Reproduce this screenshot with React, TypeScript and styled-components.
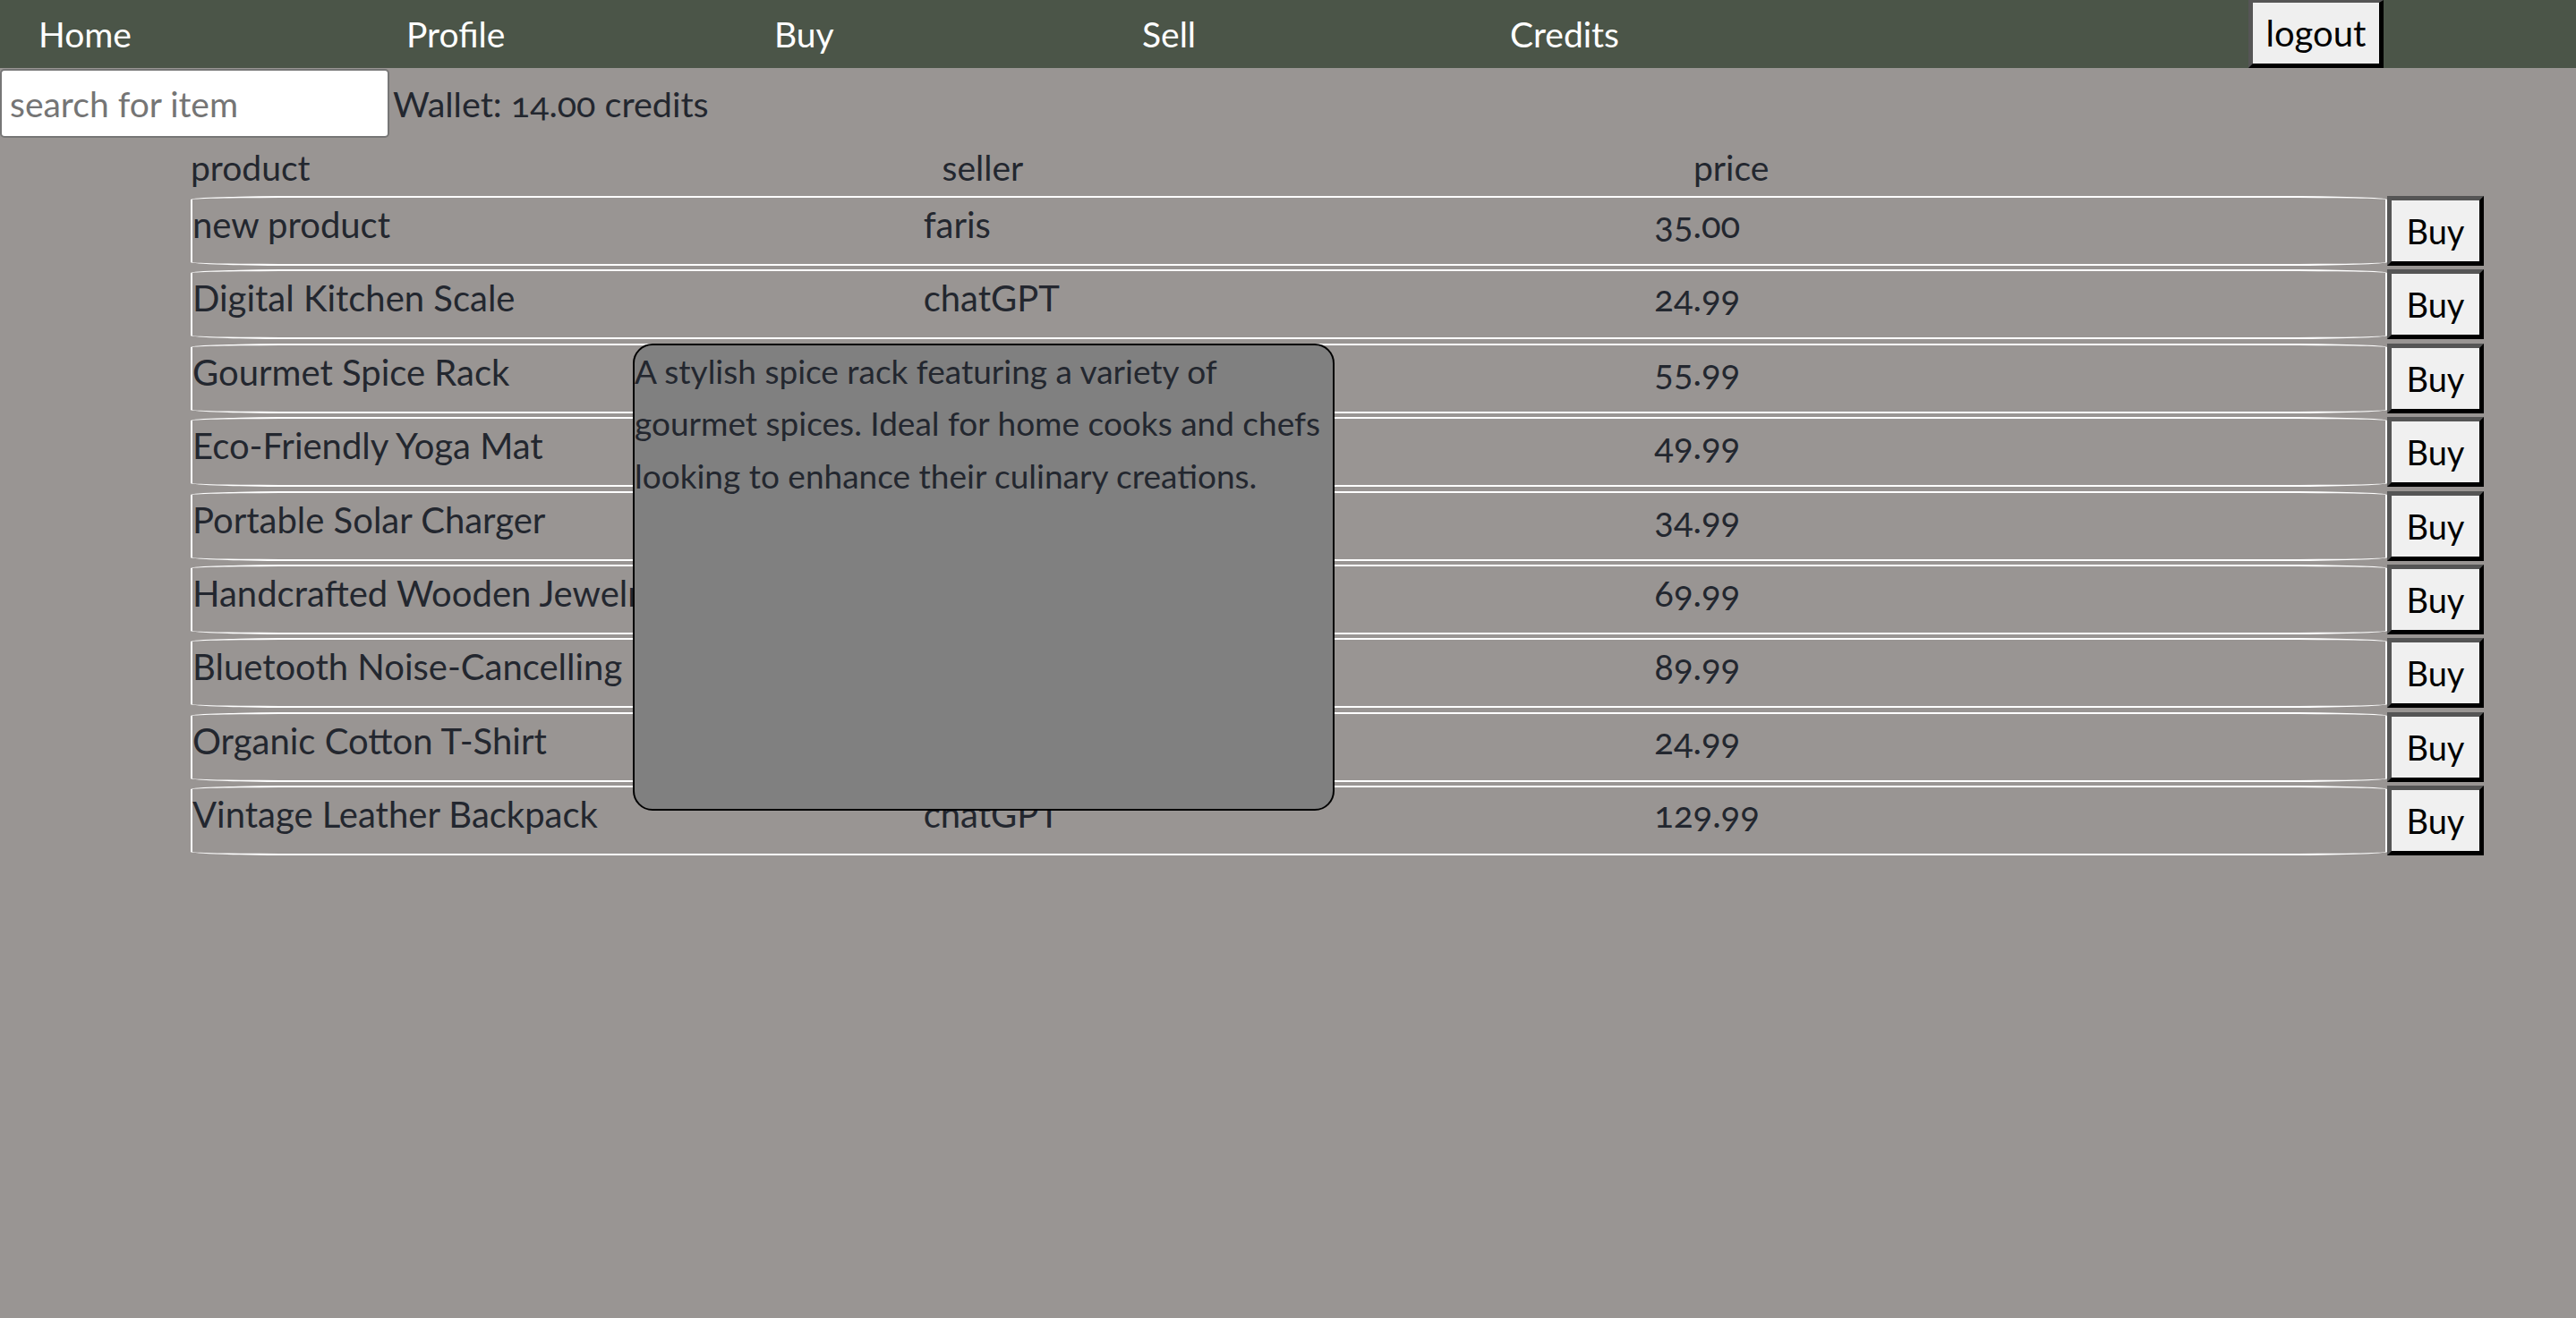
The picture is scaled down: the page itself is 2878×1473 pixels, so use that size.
import styled, { createGlobalStyle } from 'styled-components'

const GlobalStyle = createGlobalStyle`
  html, body {
    margin: 0;
    min-height: 100%;
    background: #999593;
  }
  body {
    font-family: 'Lato', 'Open Sans', sans-serif;
    color: #23272f;
    font-variant-numeric: oldstyle-nums;
  }
`

const Nav = styled.nav`
  display: flex;
  height: 76px;
  padding-left: 43px;
  background: #4b5548;
`
const NavLink = styled.a`
  width: 411px;
  color: #fff;
  font-size: 39px;
  line-height: 76px;
  text-decoration: none;
`
const LogoutButton = styled.button`
  margin-left: auto;
  margin-right: 215px;
  width: 151px;
  height: 76px;
  padding: 0;
  background: #efefef;
  border-style: solid;
  border-width: 3px 5px 5px 5px;
  border-color: #555 #000 #000 #555;
  font: 40px 'Lato', sans-serif;
  color: #000;
`
const SearchRow = styled.div`
  display: flex;
  align-items: baseline;
  gap: 4px;
  margin-top: 1px;
  font-size: 39.5px;
`
const SearchInput = styled.input`
  box-sizing: border-box;
  width: 435px;
  height: 77px;
  padding: 0 9px;
  border: 2px solid #767676;
  border-radius: 5px;
  background: #fff;
  font: 39px 'Lato', sans-serif;
  color: #23272f;
  &::placeholder {
    color: #757575;
  }
`
const HeaderRow = styled.div`
  display: grid;
  grid-template-columns: repeat(3, 839.5px);
  margin-left: 213px;
  padding-top: 10px;
  font-size: 39px;
  line-height: 47px;
`
const List = styled.div`
  display: flex;
  flex-direction: column;
  gap: 4.4px;
  width: 2562px;
  margin: 8px 0 0 213px;
`
const ItemLine = styled.div`
  display: flex;
`
const ItemBox = styled.div`
  flex: 1;
  display: flex;
  padding-top: 7px;
  border: 2px solid #fff;
  border-radius: 5%;
  font-size: 40px;
  line-height: 47px;
`
const Cell = styled.div`
  position: relative;
  flex: 1;
  min-width: 0;
  white-space: nowrap;
`
const BuyButton = styled.button`
  box-sizing: border-box;
  width: 108px;
  height: 78px;
  padding: 0;
  background: #f0f0f0;
  border: 5px solid;
  border-color: #555 #000 #000 #555;
  font: 38px 'Lato', sans-serif;
  color: #000;
`
const Tooltip = styled.div`
  position: absolute;
  top: -9px;
  left: 492px;
  z-index: 2;
  box-sizing: border-box;
  width: 784px;
  height: 522px;
  background: #808080;
  border: 2px solid #000;
  border-radius: 22px;
  white-space: normal;
  font-size: 37px;
  line-height: 58.7px;
`
const TooltipText = styled.p`
  margin: 0;
`

const items = [
  { name: 'new product', seller: 'faris', price: '35.00' },
  { name: 'Digital Kitchen Scale', seller: 'chatGPT', price: '24.99' },
  {
    name: 'Gourmet Spice Rack',
    seller: 'chatGPT',
    price: '55.99',
    description:
      'A stylish spice rack featuring a variety of gourmet spices. Ideal for home cooks and chefs looking to enhance their culinary creations.',
  },
  { name: 'Eco-Friendly Yoga Mat', seller: 'chatGPT', price: '49.99' },
  { name: 'Portable Solar Charger', seller: 'chatGPT', price: '34.99' },
  { name: 'Handcrafted Wooden Jewelry Box', seller: 'chatGPT', price: '69.99' },
  { name: 'Bluetooth Noise-Cancelling Headphones', seller: 'chatGPT', price: '89.99' },
  { name: 'Organic Cotton T-Shirt', seller: 'chatGPT', price: '24.99' },
  { name: 'Vintage Leather Backpack', seller: 'chatGPT', price: '129.99' },
]

const App = () => (
  <>
    <GlobalStyle />
    <Nav>
      <NavLink href="#">Home</NavLink>
      <NavLink href="#">Profile</NavLink>
      <NavLink href="#">Buy</NavLink>
      <NavLink href="#">Sell</NavLink>
      <NavLink href="#">Credits</NavLink>
      <LogoutButton>logout</LogoutButton>
    </Nav>
    <SearchRow>
      <SearchInput placeholder="search for item" />
      <span>Wallet: 14.00 credits</span>
    </SearchRow>
    <HeaderRow>
      <div>product</div>
      <div>seller</div>
      <div>price</div>
    </HeaderRow>
    <List>
      {items.map((item) => (
        <ItemLine key={item.name}>
          <ItemBox>
            <Cell>
              {item.name}
              {item.description && (
                <Tooltip>
                  <TooltipText>{item.description}</TooltipText>
                </Tooltip>
              )}
            </Cell>
            <Cell>{item.seller}</Cell>
            <Cell>{item.price}</Cell>
          </ItemBox>
          <BuyButton>Buy</BuyButton>
        </ItemLine>
      ))}
    </List>
  </>
)

export default App
